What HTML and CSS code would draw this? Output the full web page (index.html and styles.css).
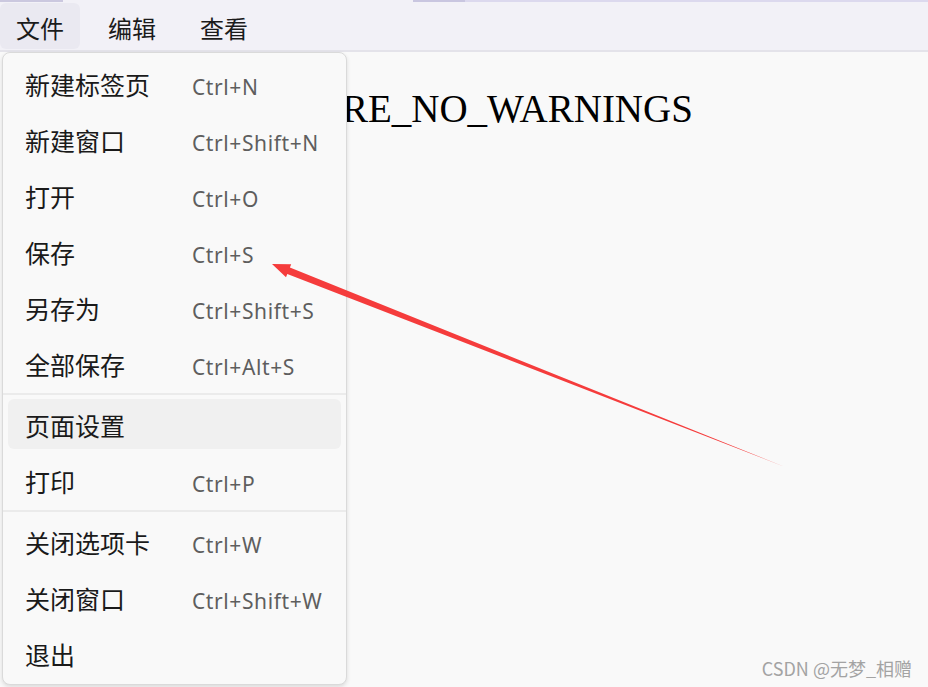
FILE: index.html
```html
<!DOCTYPE html>
<html lang="zh-CN">
<head>
    <meta charset="UTF-8">
    <meta name="viewport" content="width=device-width, initial-scale=1.0">
    <title>记事本 - 文件菜单</title>
    <link rel="stylesheet" href="styles.css">
</head>
<body>
    <div class="app">
        <div class="tabstrip">
            <span class="strip-a"></span>
            <span class="strip-gap"></span>
            <span class="strip-b"></span>
            <span class="strip-c"></span>
        </div>
        <nav class="menubar">
            <div class="menu-btn active">文件</div>
            <div class="menu-btn">编辑</div>
            <div class="menu-btn">查看</div>
        </nav>
        <main class="editor">
            <div class="code-line">#define _CRT_SECURE_NO_WARNINGS</div>
        </main>

        <div class="dropdown">
            <div class="item"><span class="label">新建标签页</span><span class="keys">Ctrl+N</span></div>
            <div class="item"><span class="label">新建窗口</span><span class="keys">Ctrl+Shift+N</span></div>
            <div class="item"><span class="label">打开</span><span class="keys">Ctrl+O</span></div>
            <div class="item"><span class="label">保存</span><span class="keys">Ctrl+S</span></div>
            <div class="item"><span class="label">另存为</span><span class="keys">Ctrl+Shift+S</span></div>
            <div class="item"><span class="label">全部保存</span><span class="keys">Ctrl+Alt+S</span></div>
            <div class="sep"></div>
            <div class="item hover"><span class="label">页面设置</span><span class="keys"></span></div>
            <div class="item"><span class="label">打印</span><span class="keys">Ctrl+P</span></div>
            <div class="sep"></div>
            <div class="item"><span class="label">关闭选项卡</span><span class="keys">Ctrl+W</span></div>
            <div class="item"><span class="label">关闭窗口</span><span class="keys">Ctrl+Shift+W</span></div>
            <div class="item"><span class="label">退出</span><span class="keys"></span></div>
        </div>

        <!-- annotation arrow pointing at 保存 -->
        <svg class="arrow" width="928" height="687" viewBox="0 0 928 687">
            <polygon points="785,467 287.3,274 286,277.3 272,264 291.2,264.3 289.9,267.6" fill="#f53c3c"/>
        </svg>

        <div class="watermark">CSDN @无梦_相赠</div>
    </div>
</body>
</html>
```

FILE: styles.css
```css
body {
    margin: 0;
    background-color: #f9f9f9;
    font-family: "Noto Sans CJK SC", "Noto Sans", sans-serif;
}
.app {
    position: relative;
    width: 928px;
    height: 687px;
    overflow: hidden;
    background-color: #f9f9f9;
}
.tabstrip {
    display: flex;
    height: 2px;
    background-color: #f2f1f7;
}
.strip-a {
    width: 63px;
    background-color: #cbc8df;
}
.strip-gap {
    width: 350px;
}
.strip-b {
    width: 52px;
    background-color: #c9c6e0;
}
.strip-c {
    flex: 1;
    background-color: #dcd9ee;
}
.menubar {
    display: flex;
    gap: 12px;
    padding: 1px 0;
    height: 46px;
    background-color: #f2f1f7;
    border-bottom: 2px solid #e4e3ea;
}
.menu-btn {
    display: flex;
    align-items: center;
    padding: 2px 16px 0;
    font-size: 24px;
    color: #1b1b1b;
    border-radius: 6px;
}
.menu-btn.active {
    background-color: #eae9f1;
}
.editor {
    padding: 33px 0 0 3px;
}
.code-line {
    font-family: "Liberation Serif", serif;
    font-size: 39px;
    line-height: 47px;
    color: #000;
    white-space: nowrap;
}
.dropdown {
    position: absolute;
    left: 2px;
    top: 52px;
    width: 333px;
    display: flex;
    flex-direction: column;
    padding: 2px 5px 3px;
    background-color: #f9f9f9;
    border: 1px solid #dadada;
    border-radius: 8px;
    box-shadow: 0 2px 4px rgba(0, 0, 0, 0.12);
}
.item {
    display: grid;
    grid-template-columns: 167px 1fr;
    align-items: center;
    height: 50px;
    margin: 3px 0;
    padding-left: 17px;
    border-radius: 6px;
}
.item.hover {
    background-color: #f0f0f0;
}
.label {
    font-size: 25px;
    color: #1a1a1a;
    padding-top: 1px;
}
.keys {
    font-family: "Noto Sans", sans-serif;
    font-size: 21px;
    letter-spacing: 0.6px;
    color: #5e5e5e;
    padding-top: 8px;
}
.sep {
    height: 2px;
    margin: 2px -5px 1px;
    background-color: #ebebeb;
}
.arrow {
    position: absolute;
    left: 0;
    top: 0;
    pointer-events: none;
}
.watermark {
    position: absolute;
    right: 16px;
    bottom: 6px;
    font-size: 18px;
    color: #a3a3a3;
}
```
